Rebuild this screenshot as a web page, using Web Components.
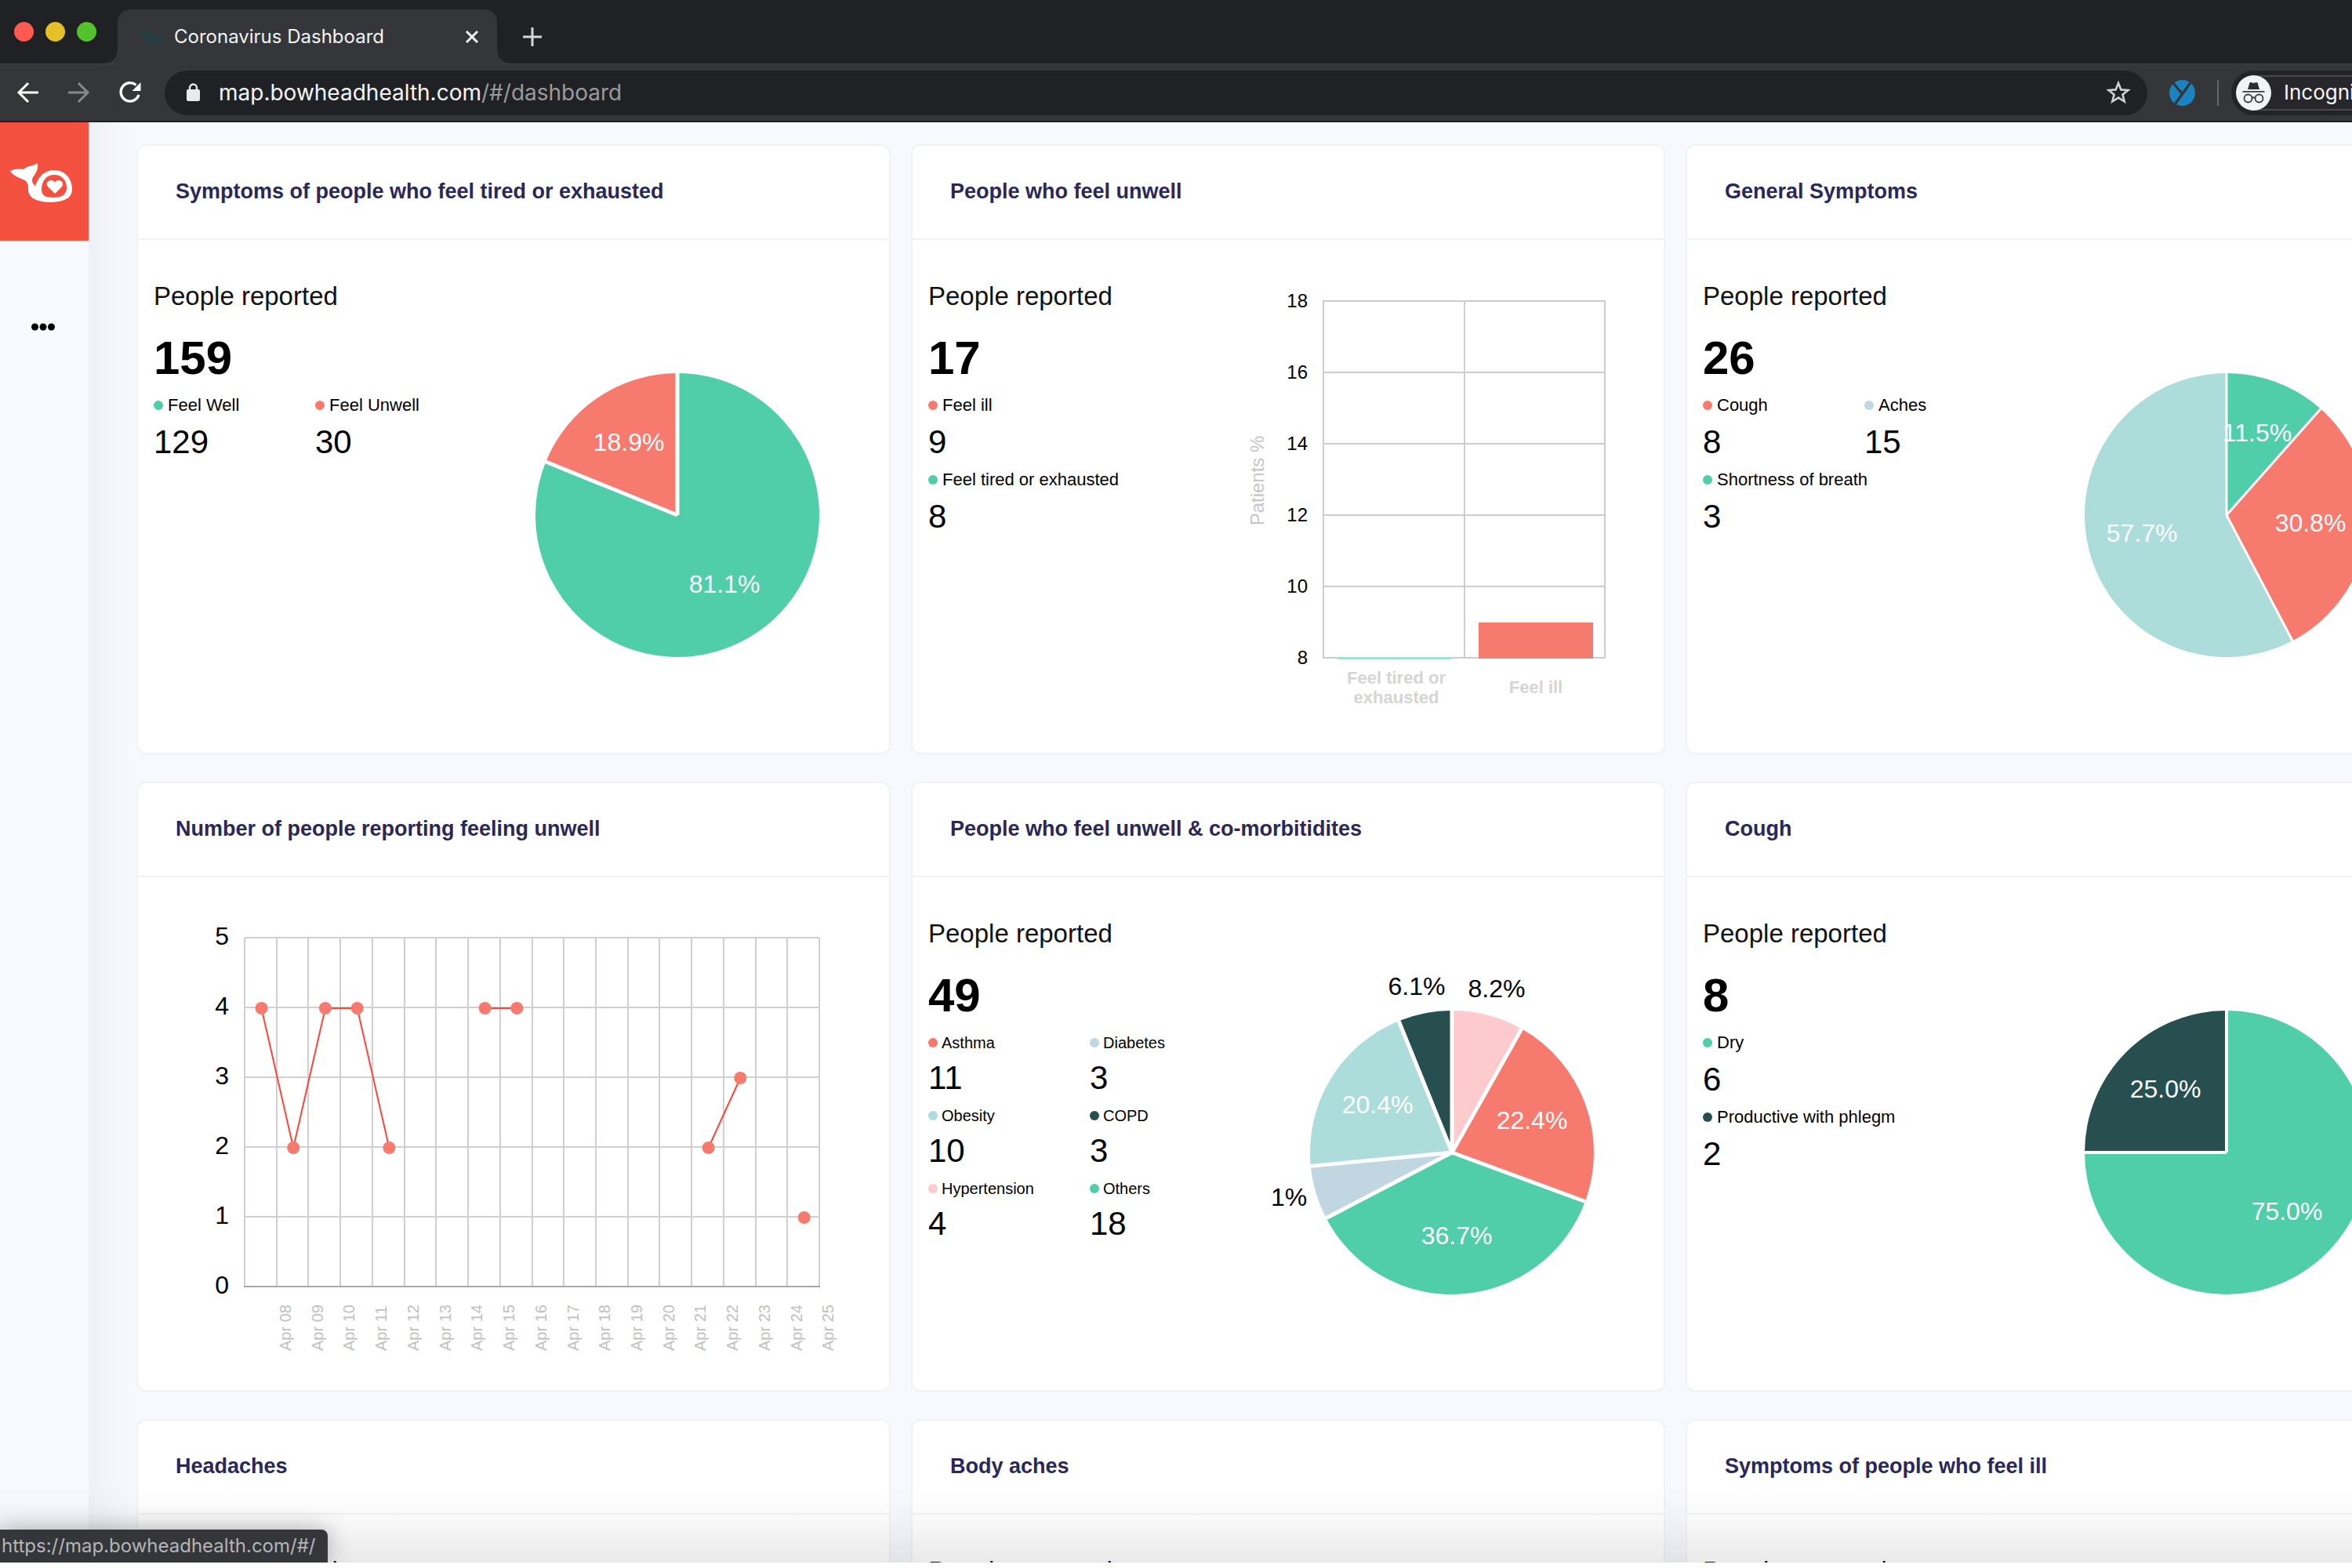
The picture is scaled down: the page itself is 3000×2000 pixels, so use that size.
<!DOCTYPE html>
<html lang="en">
<head>
<meta charset="utf-8">
<title>Coronavirus Dashboard</title>
<style>
  html, body { margin: 0; height: 100%; background: #fff; overflow: hidden; }
  body { font-family: "Liberation Sans", Arial, sans-serif; color: #000; }
</style>
</head>
<body>
<browser-window>
  <browser-tabs slot="chrome" heading="Coronavirus Dashboard"></browser-tabs>
  <browser-toolbar slot="chrome" host="map.bowheadhealth.com" path="/#/dashboard"></browser-toolbar>
  <app-sidebar slot="page"></app-sidebar>
  <dash-board slot="page">
    <dash-card heading="Symptoms of people who feel tired or exhausted">
      <stat-summary total="159">
        <stat-item label="Feel Well" value="129" color="#50cda9"></stat-item>
        <stat-item label="Feel Unwell" value="30" color="#f67a6e"></stat-item>
      </stat-summary>
      <pie-chart gap="5" slices='[[129,"#50cda9","81.1%",60,99],[30,"#f67a6e","18.9%",-62,-82]]'></pie-chart>
    </dash-card>
    <dash-card heading="People who feel unwell">
      <stat-summary total="17" stacked>
        <stat-item label="Feel ill" value="9" color="#f67a6e"></stat-item>
        <stat-item label="Feel tired or exhausted" value="8" color="#50cda9"></stat-item>
      </stat-summary>
      <bar-chart></bar-chart>
    </dash-card>
    <dash-card heading="General Symptoms">
      <stat-summary total="26">
        <stat-item label="Cough" value="8" color="#f67a6e"></stat-item>
        <stat-item label="Aches" value="15" color="#c0d6e0"></stat-item>
        <stat-item label="Shortness of breath" value="3" color="#50cda9"></stat-item>
      </stat-summary>
      <pie-chart gap="3" slices='[[3,"#50cda9","11.5%",39,-94],[8,"#f67a6e","30.8%",107,21],[15,"#acddda","57.7%",-108,34]]'></pie-chart>
    </dash-card>
    <dash-card heading="Number of people reporting feeling unwell">
      <line-chart></line-chart>
    </dash-card>
    <dash-card heading="People who feel unwell &amp; co-morbitidites">
      <stat-summary total="49" compact>
        <stat-item label="Asthma" value="11" color="#f67a6e"></stat-item>
        <stat-item label="Diabetes" value="3" color="#c0d6e0"></stat-item>
        <stat-item label="Obesity" value="10" color="#acddda"></stat-item>
        <stat-item label="COPD" value="3" color="#284f4f"></stat-item>
        <stat-item label="Hypertension" value="4" color="#fdcbcd"></stat-item>
        <stat-item label="Others" value="18" color="#50cda9"></stat-item>
      </stat-summary>
      <pie-chart gap="5" slices='[[4,"#fdcbcd","8.2%",57,-198,"#000"],[11,"#f67a6e","22.4%",102,-30],[18,"#50cda9","36.7%",6,117],[3,"#c0d6e0","1%",-208,68,"#000"],[10,"#acddda","20.4%",-95,-50],[3,"#284f4f","6.1%",-45,-201,"#000"]]'></pie-chart>
    </dash-card>
    <dash-card heading="Cough">
      <stat-summary total="8" stacked>
        <stat-item label="Dry" value="6" color="#50cda9"></stat-item>
        <stat-item label="Productive with phlegm" value="2" color="#284f4f"></stat-item>
      </stat-summary>
      <pie-chart gap="4" slices='[[6,"#50cda9","75.0%",77,86],[2,"#284f4f","25.0%",-78,-70]]'></pie-chart>
    </dash-card>
    <dash-card heading="Headaches"><stat-summary></stat-summary></dash-card>
    <dash-card heading="Body aches"><stat-summary></stat-summary></dash-card>
    <dash-card heading="Symptoms of people who feel ill"><stat-summary></stat-summary></dash-card>
  </dash-board>
  <status-bubble slot="status">https://map.bowheadhealth.com/#/</status-bubble>
</browser-window>

<script>
const UI_FONT = 'Inter, Roboto, "Liberation Sans", sans-serif';
const WHALE = `<path fill-rule="evenodd" d="M13 28C19 25 25 25 30 26C35 21 42 22 48 18C49 27 45 32 42 36C40 40 41 44 45 47C49 35 57 27 69 27C83 27 92 38 92 51C92 63 82 67 66 68C50 68 37 64 36 53C36 47 36 44 33 41C28 37 17 36 13 28ZM53 52C53 41 59 33 69 33C79 33 85 40 85 49C85 58 79 62 68 62C58 62 53 59 53 52Z"/><path d="M70 57L61 48C58 44 61 40 65 40C68 40 70 42 70 43C70 42 72 40 75 40C79 40 82 44 79 48Z"/>`;

function define(name, render) {
  customElements.define(name, class extends HTMLElement {
    connectedCallback() {
      if (this.shadowRoot) return;
      const root = this.attachShadow({ mode: 'open' });
      const tpl = document.createElement('template');
      tpl.innerHTML = render(this);
      root.append(tpl.content.cloneNode(true));
    }
  });
}
const BUTTON = `button{all:unset;box-sizing:border-box;display:flex;align-items:center;justify-content:center;cursor:pointer}svg{display:block}`;

define('browser-window', () => `
<style>
:host{display:flex;flex-direction:column;box-sizing:border-box;height:100vh;padding-bottom:7px;position:relative}
.page{display:flex;flex:1;min-height:0;overflow:hidden;position:relative;background:#f8f9fe}
.page::after{content:"";position:absolute;left:0;right:0;bottom:0;height:100px;pointer-events:none;background:linear-gradient(rgba(0,0,0,0),rgba(0,0,0,.02) 40%,rgba(0,0,0,.085))}
</style>
<slot name="chrome"></slot>
<div class="page"><slot name="page"></slot></div>
<slot name="status"></slot>`);

define('browser-tabs', el => `
<style>
${BUTTON}
:host{display:flex;height:81px;background:#202124;padding-left:18px;align-items:center;font-family:${UI_FONT}}
.lights{display:flex;gap:15px;margin-right:27px}
.lights button{width:25px;height:25px;border-radius:50%}
.tab{display:flex;align-items:center;align-self:flex-end;box-sizing:border-box;width:484px;height:69px;padding:0 20px 0 24px;border-radius:16px 16px 0 0;background:#35363a;position:relative;color:#f1f3f4}
.tab::before,.tab::after{content:"";position:absolute;bottom:0;width:16px;height:16px}
.tab::before{left:-16px;background:radial-gradient(circle at 0 0,#202124 15px,#35363a 16px)}
.tab::after{right:-16px;background:radial-gradient(circle at 100% 0,#202124 15px,#35363a 16px)}
.tab span{flex:1;font-size:24px;line-height:32px;margin-left:14px}
.tab .close{width:24px;height:24px}
.new{width:48px;height:48px;margin:12px 0 0 21px}
</style>
<div class="lights"><button aria-label="Close window" style="background:#ff5a52"></button><button aria-label="Minimize window" style="background:#e6c029"></button><button aria-label="Zoom window" style="background:#53c22b"></button></div>
<div class="tab">
<svg width="34" height="24" viewBox="12 16 82 54" fill="#213f40">${WHALE}</svg>
<span>${el.getAttribute('heading')}</span>
<button class="close" aria-label="Close tab"><svg width="24" height="24" viewBox="0 0 24 24" stroke="#f1f3f4" stroke-width="3"><path d="M5 5L19 19M19 5L5 19"/></svg></button>
</div>
<button class="new" aria-label="New tab"><svg width="26" height="26" viewBox="0 0 26 26" stroke="#d5d7da" stroke-width="3"><path d="M13 1V25M1 13H25"/></svg></button>`);

define('browser-toolbar', el => `
<style>
${BUTTON}
:host{display:flex;align-items:center;box-sizing:border-box;height:75px;padding:0 0 0 3px;background:#35363a;border-top:1px solid #3f4044;border-bottom:2px solid #1f2023;font-family:${UI_FONT}}
.nav{width:65px;height:56px;flex:none}
.box{display:flex;align-items:center;flex:1;box-sizing:border-box;height:57px;margin-left:12px;padding:0 20px 0 28px;border-radius:29px;background:#202124;color:#9a9b9e;font-size:28px;line-height:34px}
.url{flex:1;margin-left:24px;outline:0;white-space:nowrap}
.url b{font-weight:400;color:#f5f6f7}
.ext{margin-left:28px}
.sep{width:2px;height:33px;margin:0 16px 0 28px;background:#66676b}
.who{display:flex;align-items:center;flex:none;box-sizing:border-box;width:154px;height:57px;padding-left:6px;border-radius:29px 0 0 29px;background:#242428;overflow:hidden}
.who div{display:flex;align-items:center;box-sizing:border-box;height:45px;border:solid #47484c;border-width:2px 0;border-radius:23px 0 0 23px;color:#f5f6f7;font-size:26px;line-height:32px;gap:16px;background:#27272b}
.who svg{flex:none}
</style>
<button class="nav" aria-label="Back"><svg width="30" height="30" viewBox="0 0 30 30" fill="none" stroke="#fff" stroke-width="3"><path d="M28 15H3M15 3L3 15L15 27"/></svg></button>
<button class="nav" aria-label="Forward"><svg width="30" height="30" viewBox="0 0 30 30" fill="none" stroke="#87888b" stroke-width="3"><path d="M1 15H26M14 3L26 15L14 27"/></svg></button>
<button class="nav" aria-label="Reload"><svg width="32" height="32" viewBox="0 0 32 32"><path d="M27 19A11.700 11.700 0 1 1 23.500 6.500" fill="none" stroke="#fff" stroke-width="3.400"/><path d="M29.500 3V14H18.500Z" fill="#fff"/></svg></button>
<div class="box">
<svg width="17" height="24" viewBox="0 0 17 24"><rect y="8" width="17" height="15" rx="2" fill="#e9eaeb"/><path d="M4 9V6A4.500 4.500 0 0 1 13 6V9" fill="none" stroke="#e9eaeb" stroke-width="2.400"/></svg>
<div class="url" role="textbox" contenteditable="true" spellcheck="false" aria-label="Address"><b>${el.getAttribute('host')}</b>${el.getAttribute('path')}</div>
<button aria-label="Bookmark this page"><svg width="34" height="34" viewBox="0 0 34 34" fill="none" stroke="#cfd0d2" stroke-width="2.600"><path d="M17 5L20.400 13.400L29.400 14L22.400 19.700L24.700 28.500L17 23.600L9.300 28.500L11.600 19.700L4.600 14L13.600 13.400Z"/></svg></button>
</div>
<button class="ext" aria-label="Extension"><svg width="33" height="33" viewBox="0 0 33 33"><circle cx="16.500" cy="16.500" r="16.500" fill="#1b84c0"/><path d="M5 4L15.500 16.500M28 2L6.500 32" stroke="#35363a" stroke-width="3.400" fill="none"/></svg></button>
<div class="sep"></div>
<div class="who"><div>
<svg width="45" height="45" viewBox="0 0 45 45" fill="none" stroke="#3a3b3f" stroke-width="1.800"><circle cx="22.500" cy="22.500" r="22.500" fill="#f1f3f4" stroke="none"/><path d="M15 18L17.500 9.500Q18 8.600 19 9L22.500 10L26 9Q27 8.600 27.500 9.500L30 18Z" fill="#2c2d31" stroke="none"/><path d="M8.500 20.800H36.500"/><circle cx="15.500" cy="29.500" r="5"/><circle cx="29.500" cy="29.500" r="5"/><path d="M20.500 29Q22.500 27.500 24.500 29"/></svg>
<span>Incognito</span></div></div>`);

define('app-sidebar', () => `
<style>
${BUTTON}
:host{display:flex;flex-direction:column;flex:none;width:113px;background:#f8f9fe}
a{display:flex;align-items:center;height:151px;background:#f4503f}
button{width:110px;height:40px;margin-top:90px}
</style>
<a href="#/" aria-label="Home"><svg width="113" height="90" viewBox="0 -3 113 90" fill="#fff">${WHALE}</svg></a>
<button aria-label="More"><svg width="30" height="10" viewBox="0 0 30 10"><circle cx="4.500" cy="5" r="4.500"/><circle cx="15" cy="5" r="4.500"/><circle cx="25.500" cy="5" r="4.500"/></svg></button>`);

define('dash-board', () => `
<style>
:host{display:grid;flex:1;min-width:0;box-sizing:border-box;grid-template-columns:repeat(3,calc(32vw + 2px));gap:35px 26px;align-content:start;padding:28px 0 0 61px;background:linear-gradient(to right,#eff1f6,#f8f9fe 60px)}
</style><slot></slot>`);

define('dash-card', el => `
<style>
:host{display:block;box-sizing:border-box;min-height:778px;border:2px solid #f1f2f3;border-radius:12px;background:#fff}
h2{box-sizing:border-box;margin:0;height:120px;display:flex;align-items:center;padding:0 48px 2px;border-bottom:2px solid #f1f2f3;color:#2a2859;font-size:27px;line-height:34px;font-weight:700}
div{display:flex;align-items:flex-start}
</style>
<h2>${el.getAttribute('heading').replace('&', '&amp;')}</h2><div><slot></slot></div>`);

define('stat-summary', el => `
<style>
:host{display:block;flex:1;min-width:0;padding:52px 0 0 20px;white-space:nowrap;--label:22px;--gap:10px;--dot:6px}
:host([compact]){--label:20px;--gap:8px;--dot:5px}
h3{margin:0;font-size:33px;line-height:40px;font-weight:400;color:#111}
p{margin:25px 0 13px;font-size:60px;line-height:68px;font-weight:700}
.grid{display:grid;grid-template-columns:206px 1fr;row-gap:11px}
:host([stacked]) .grid{grid-template-columns:1fr}
</style>
<h3>People reported</h3>${el.hasAttribute('total') ? `<p>${el.getAttribute('total')}</p>` : ''}
<div class="grid"><slot></slot></div>`);

define('stat-item', el => `
<style>
:host{display:flex;flex-direction:column;gap:var(--gap);min-width:0}
.label{display:flex;align-items:center;gap:var(--dot);font-size:var(--label);line-height:26px}
i{flex:none;width:12px;height:12px;border-radius:50%;background:${el.getAttribute('color')}}
.value{font-size:42px;line-height:48px}
</style>
<div class="label"><i></i><span>${el.getAttribute('label')}</span></div><div class="value">${el.getAttribute('value')}</div>`);

const CHART = `:host{display:block;flex:none}svg{display:block;overflow:visible}text{font-family:"Liberation Sans",Arial,sans-serif}`;

define('pie-chart', el => {
  const slices = JSON.parse(el.getAttribute('slices'));
  const total = slices.reduce((s, d) => s + d[0], 0);
  const r = 181;
  const at = t => [Math.sin(t * 2 * Math.PI) * r, -Math.cos(t * 2 * Math.PI) * r].map(n => n.toFixed(2)).join(' ');
  let acc = 0, wedges = '', seams = '';
  for (const [v, color] of slices) {
    const a = acc / total, b = (acc + v) / total;
    wedges += `<path fill="${color}" d="M0 0L${at(a)}A${r} ${r} 0 ${b - a > .5 ? 1 : 0} 1 ${at(b)}Z"/>`;
    seams += `M0 0L${at(a)}`;
    acc += v;
  }
  const labels = slices.map(([, , t, x, y, c]) => `<text x="${x}" y="${y}" fill="${c || '#fff'}">${t}</text>`).join('');
  return `<style>${CHART}text{font-size:32px;text-anchor:middle}</style>
<svg width="560" height="600" viewBox="-290 -351 560 600" role="img">${wedges}<path d="${seams}" stroke="#fff" stroke-width="${el.getAttribute('gap')}" stroke-linejoin="round"/>${labels}</svg>`;
});

define('bar-chart', () => {
  let out = '';
  for (let i = 0; i < 6; i++) {
    const y = 78 + 91 * i;
    out += `<path class="g" d="M126 ${y}H485"/><text class="tick" x="106" y="${y + 8}">${18 - 2 * i}</text>`;
  }
  return `<style>${CHART}.g{stroke:#cdcdcd;stroke-width:2}.tick{font-size:24px;text-anchor:end}.x{font-size:22px;font-weight:700;fill:#d5d5d5;text-anchor:middle}.y{font-size:24px;fill:#c6c6c6;text-anchor:middle}</style>
<svg width="560" height="600" viewBox="0 0 560 600" role="img">${out}
<path class="g" d="M126 77V534M306 78V533M485 77V534"/>
<rect x="144" y="532" width="145" height="3" fill="#a3e2cf"/><rect x="324" y="488" width="146" height="46" fill="#f67a6e"/>
<text class="x" x="219" y="566">Feel tired or</text><text class="x" x="219" y="591">exhausted</text><text class="x" x="397" y="578">Feel ill</text>
<text class="y" transform="translate(50 307) rotate(-90)">Patients %</text></svg>`;
});

define('line-chart', () => {
  const x0 = 136, dx = 733 / 18, y0 = 522, dy = 89;
  let grid = '', text = '';
  for (let i = 0; i <= 18; i++) grid += `M${Math.round(x0 + dx * i)} 77V522`;
  for (let v = 0; v <= 5; v++) {
    grid += `M136 ${y0 - dy * v}H869`;
    text += `<text class="y" x="116" y="${y0 - dy * v + 9}">${v}</text>`;
  }
  for (let i = 0; i < 18; i++) text += `<text class="x" transform="translate(${Math.round(195 + dx * i)} 604) rotate(-90)">Apr ${String(8 + i).padStart(2, '0')}</text>`;
  const runs = [[[0, 4], [1, 2], [2, 4], [3, 4], [4, 2]], [[7, 4], [8, 4]], [[14, 2], [15, 3]], [[17, 1]]];
  const pt = ([i, v]) => [(157.5 + dx * i).toFixed(1), y0 + 1 - dy * v];
  const lines = runs.map(r => `<polyline points="${r.map(p => pt(p).join()).join(' ')}"/>`).join('');
  const dots = runs.flat().map(p => `<circle cx="${pt(p)[0]}" cy="${pt(p)[1]}" r="8"/>`).join('');
  return `<style>${CHART}.g{stroke:#d0d0d0;stroke-width:2}polyline{fill:none;stroke:#f9483a;stroke-width:2}circle{fill:#f67a6e}.y{font-size:32px;text-anchor:end}.x{font-size:20px;fill:#c0c0c0}</style>
<svg width="956" height="640" viewBox="0 0 956 640" role="img"><path class="g" d="${grid}"/><path d="M135 522H870" stroke="#a8a8a8" stroke-width="2"/>${lines}${dots}${text}</svg>`;
});

define('status-bubble', () => `
<style>
:host{position:absolute;left:0;bottom:7px;box-sizing:border-box;height:42px;padding:3px 15px 0 2px;border-radius:0 8px 0 0;background:#35363a;color:#b4b5b7;font:24px/36px ${UI_FONT};white-space:nowrap;box-shadow:0 0 30px rgba(0,0,0,.3);clip-path:inset(-50px -50px 0 0)}
</style><slot></slot>`);
</script>
</body>
</html>
